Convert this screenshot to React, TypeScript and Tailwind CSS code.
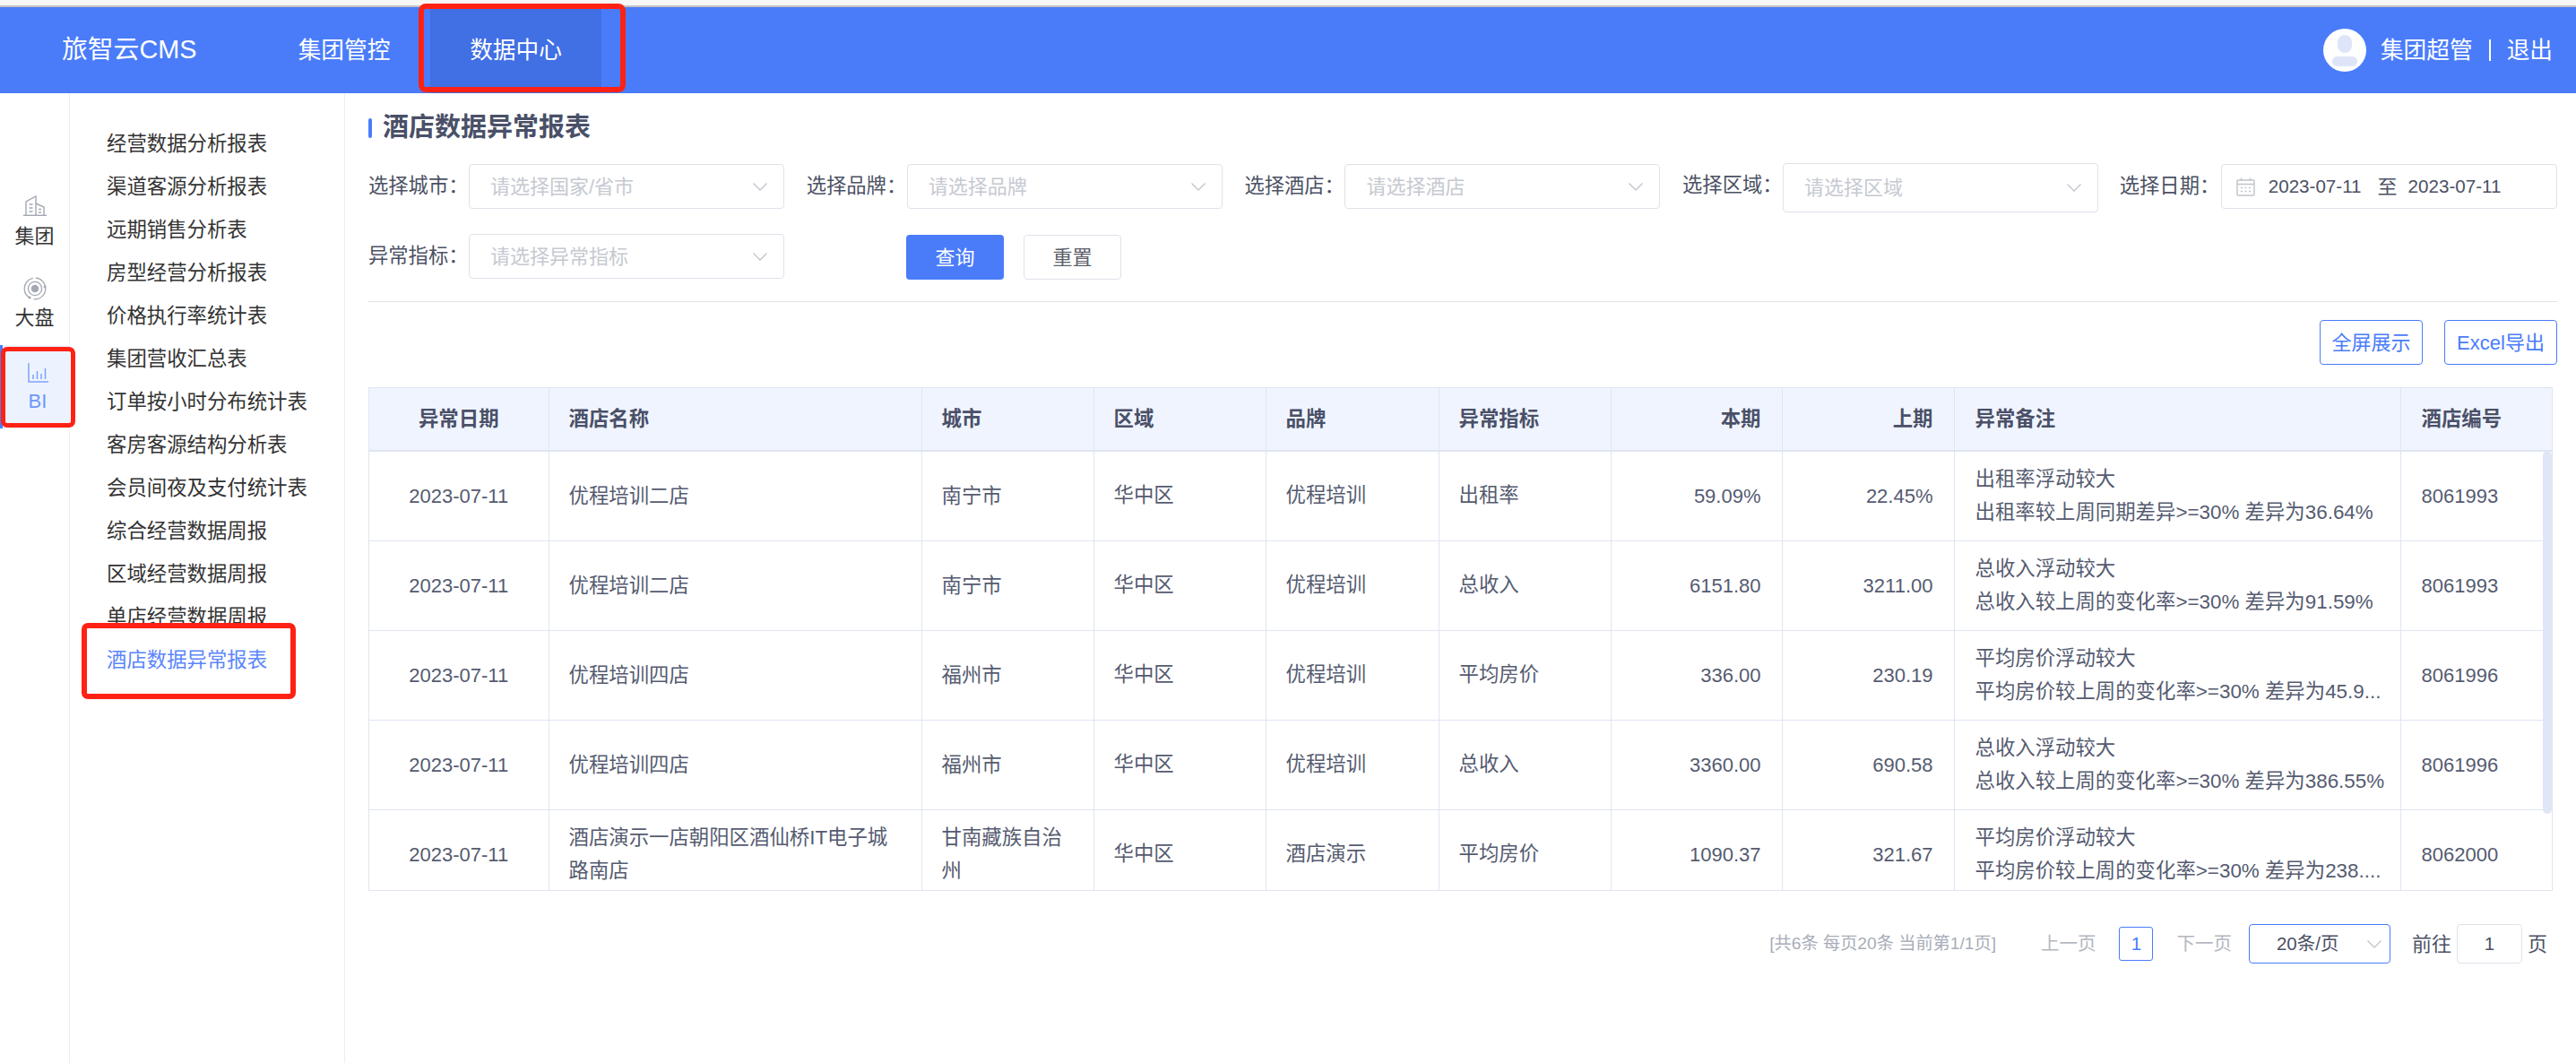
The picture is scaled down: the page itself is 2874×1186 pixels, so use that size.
const reports = [
  '经营数据分析报表',
  '渠道客源分析报表',
  '远期销售分析表',
  '房型经营分析报表',
  '价格执行率统计表',
  '集团营收汇总表',
  '订单按小时分布统计表',
  '客房客源结构分析表',
  '会员间夜及支付统计表',
  '综合经营数据周报',
  '区域经营数据周报',
  '单店经营数据周报',
  '酒店数据异常报表',
]

const rows = [
  ['优程培训二店', '南宁市', '优程培训', '出租率', '59.09%', '22.45%', '出租率浮动较大', '出租率较上周同期差异>=30% 差异为36.64%', '8061993'],
  ['优程培训二店', '南宁市', '优程培训', '总收入', '6151.80', '3211.00', '总收入浮动较大', '总收入较上周的变化率>=30% 差异为91.59%', '8061993'],
  ['优程培训四店', '福州市', '优程培训', '平均房价', '336.00', '230.19', '平均房价浮动较大', '平均房价较上周的变化率>=30% 差异为45.9...', '8061996'],
  ['优程培训四店', '福州市', '优程培训', '总收入', '3360.00', '690.58', '总收入浮动较大', '总收入较上周的变化率>=30% 差异为386.55%', '8061996'],
  ['酒店演示一店朝阳区酒仙桥IT电子城路南店', '甘南藏族自治州', '酒店演示', '平均房价', '1090.37', '321.67', '平均房价浮动较大', '平均房价较上周的变化率>=30% 差异为238....', '8062000'],
]

function Chevron() {
  return (
    <svg width="16" height="9" viewBox="0 0 16 9" fill="none" stroke="#c0c4cc" strokeWidth="1.3" className="shrink-0">
      <path d="M0.5 0.5 L8 8 L15.5 0.5" />
    </svg>
  )
}

function BuildingIcon() {
  return (
    <svg width="26" height="23" viewBox="0 0 26 23" fill="none" stroke="#a3a8b4" strokeWidth="1.4">
      <path d="M0 22.3 H26" />
      <path d="M3 22 V7 L14 1 V22" />
      <path d="M14 9 L23 13 V22" />
      <path d="M6.5 10 H10.5 M6.5 14 H10.5 M6.5 18 H10.5 M17 15.5 H20 M17 19 H20" />
    </svg>
  )
}

function TargetIcon() {
  return (
    <svg width="26" height="26" viewBox="0 0 26 26" fill="none" stroke="#a3a8b4" strokeWidth="1.3">
      <circle cx="13" cy="13" r="11.8" strokeDasharray="20 3 30 3" />
      <circle cx="13" cy="13" r="7.6" />
      <circle cx="13" cy="13" r="3.6" fill="#a3a8b4" />
      <circle cx="24" cy="11" r="1.4" fill="#a3a8b4" stroke="none" />
      <circle cx="7" cy="23" r="1.4" fill="#a3a8b4" stroke="none" />
    </svg>
  )
}

function BarsIcon() {
  return (
    <svg width="23" height="22" viewBox="0 0 23 22" fill="none" stroke="#7ea2fb" strokeWidth="1.5">
      <path d="M1 0 V21 H23" />
      <path d="M6 18 V13 M10.5 18 V9 M15 18 V12 M19.5 18 V6" />
    </svg>
  )
}

function CalendarIcon() {
  return (
    <svg width="21" height="21" viewBox="0 0 21 21" fill="none" stroke="#c0c4cc" strokeWidth="1.4" className="shrink-0">
      <rect x="1" y="3" width="19" height="17" rx="1" />
      <path d="M1 7.5 H20 M5.5 0.5 V4 M15.5 0.5 V4" />
      <path d="M5 11.5 H7 M9.5 11.5 H11.5 M14 11.5 H16 M5 15.5 H7 M9.5 15.5 H11.5 M14 15.5 H16" />
    </svg>
  )
}

function Select({ label, placeholder, className = 'h-[50px]' }: { label: string; placeholder: string; className?: string }) {
  return (
    <div className="flex items-start">
      <div className="w-[112px] h-[50px] leading-[50px] text-[22.3px] text-[#4c5164]">{label}：</div>
      <div className={`w-[352px] flex items-center justify-between pl-[23px] pr-[18px] border border-[#dfe2ea] rounded-[4px] bg-white ${className}`}>
        <span className="text-[22px] text-[#c6c9d1]">{placeholder}</span>
        <Chevron />
      </div>
    </div>
  )
}

export default function App() {
  return (
    <div className="h-screen flex flex-col overflow-hidden bg-white relative font-['Liberation_Sans','Noto_Sans_CJK_SC',sans-serif]">
      <div className="h-[8px] shrink-0 bg-[#f6f6f6] border-b-2 border-[#c2c2c2]" />

      <header className="h-[96px] shrink-0 bg-[#4a7cfa] text-white flex items-center pl-[69px] pr-[26px]">
        <div className="text-[28.8px] w-[219px]">旅智云CMS</div>
        <nav className="flex self-stretch text-[25.7px]">
          <div className="w-[192px] flex items-center justify-center">集团管控</div>
          <div className="w-[191px] flex items-center justify-center bg-[#416fe4]">数据中心</div>
        </nav>
        <div className="ml-auto flex items-center text-[25.7px]">
          <div className="w-[48px] h-[48px] rounded-full bg-white flex flex-col items-center justify-center gap-[4px] overflow-hidden">
            <div className="w-[16px] h-[20px] rounded-full bg-[#dfe5f8]" />
            <div className="w-[28px] h-[11px] rounded-full bg-[#dfe5f8]" />
          </div>
          <span className="ml-[16px]">集团超管</span>
          <span className="mx-[18px] w-[2px] h-[24px] bg-white" />
          <span>退出</span>
        </div>
      </header>

      <div className="flex-1 flex min-h-0">
        <aside className="w-[78px] shrink-0 border-r border-[#eceef5] pt-[95px] text-[22px] text-[#333]">
          <div className="h-[93px] flex flex-col items-center pt-[19px] gap-[10px]">
            <BuildingIcon />
            <span className="leading-[26px]">集团</span>
          </div>
          <div className="h-[93px] flex flex-col items-center pt-[17px] gap-[7px]">
            <TargetIcon />
            <span className="leading-[26px]">大盘</span>
          </div>
          <div className="h-[93px] flex flex-col items-center pt-[20px] pl-[4px] gap-[8px] bg-[#edf3fe] border-l-[3px] border-[#4a7cfa] text-[#6f97fa]">
            <BarsIcon />
            <span className="leading-[26px]">BI</span>
          </div>
        </aside>

        <aside className="w-[307px] shrink-0 border-r border-[#eceef5] pt-[33px] pl-[41px]">
          {reports.map((r, i) => (
            <div key={r} className={`h-[48px] leading-[48px] text-[22.4px] ${i === reports.length - 1 ? 'text-[#5b86fb]' : 'text-[#333]'}`}>
              {r}
            </div>
          ))}
        </aside>

        <main className="flex-1 min-w-0 pl-[26px] pr-[21px]">
          <div className="h-[79px] flex items-center pb-[1px]">
            <span className="w-[4px] h-[22px] rounded-[2px] bg-[#4a7cfa]" />
            <h1 className="ml-[12px] text-[29px] font-bold text-[#4a5068]">酒店数据异常报表</h1>
          </div>

          <div className="flex items-start gap-[24.7px] h-[50px]">
            <Select label="选择城市" placeholder="请选择国家/省市" />
            <Select label="选择品牌" placeholder="请选择品牌" />
            <Select label="选择酒店" placeholder="请选择酒店" />
            <div className="-mt-px">
              <Select label="选择区域" placeholder="请选择区域" className="h-[55px]" />
            </div>
            <div className="flex items-start -ml-[1px]">
              <div className="w-[113px] h-[50px] leading-[50px] text-[22.3px] text-[#4c5164]">选择日期：</div>
              <div className="w-[375px] h-[50px] flex items-center pl-[16px] border border-[#dfe2ea] rounded-[4px] text-[20.6px] text-[#4c5164]">
                <CalendarIcon />
                <span className="ml-[15px]">2023-07-11</span>
                <span className="ml-[18px] text-[22px]">至</span>
                <span className="ml-[12px]">2023-07-11</span>
              </div>
            </div>
          </div>

          <div className="flex items-center mt-[28px] h-[50px]">
            <Select label="异常指标" placeholder="请选择异常指标" />
            <button className="ml-[136px] mt-[2px] w-[109px] h-[50px] rounded-[4px] bg-[#4a7cfa] text-white text-[22px]">查询</button>
            <button className="ml-[22px] mt-[2px] w-[109px] h-[50px] rounded-[4px] border border-[#dfe2ea] text-[#5c5f6a] text-[22px]">重置</button>
          </div>

          <div className="mt-[25px] border-t border-[#e0e2ea]" />

          <div className="mt-[20px] flex justify-end gap-[24px]">
            <button className="w-[115px] h-[50px] rounded-[4px] border border-[#4a7cfa] text-[#4a7cfa] text-[22px]">全屏展示</button>
            <button className="w-[126px] h-[50px] rounded-[4px] border border-[#4a7cfa] text-[#4a7cfa] text-[22px]">Excel导出</button>
          </div>

          <div className="relative mt-[25px] mr-[5px] h-[562px] overflow-hidden border border-[#e0e5f2]">
            <table className="w-[2435px] table-fixed border-collapse text-[22.4px] text-[#555b70]">
              <colgroup>
                <col className="w-[200px]" />
                <col className="w-[416px]" />
                <col className="w-[192px]" />
                <col className="w-[192px]" />
                <col className="w-[193px]" />
                <col className="w-[192px]" />
                <col className="w-[191px]" />
                <col className="w-[192px]" />
                <col className="w-[498px]" />
                <col className="w-[169px]" />
              </colgroup>
              <thead>
                <tr className="h-[70px] bg-[#f0f4fe] text-[#4a5068] font-bold">
                  <th className="text-center border-r border-b-2 border-[#e0e5f2]">异常日期</th>
                  <th className="text-left pl-[22px] border-r border-b-2 border-[#e0e5f2]">酒店名称</th>
                  <th className="text-left pl-[22px] border-r border-b-2 border-[#e0e5f2]">城市</th>
                  <th className="text-left pl-[22px] border-r border-b-2 border-[#e0e5f2]">区域</th>
                  <th className="text-left pl-[22px] border-r border-b-2 border-[#e0e5f2]">品牌</th>
                  <th className="text-left pl-[22px] border-r border-b-2 border-[#e0e5f2]">异常指标</th>
                  <th className="text-right pr-[23px] border-r border-b-2 border-[#e0e5f2]">本期</th>
                  <th className="text-right pr-[23px] border-r border-b-2 border-[#e0e5f2]">上期</th>
                  <th className="text-left pl-[23px] border-r border-b-2 border-[#e0e5f2]">异常备注</th>
                  <th className="text-left pl-[23px] border-b-2 border-[#e0e5f2]">酒店编号</th>
                </tr>
              </thead>
              <tbody>
                {rows.map((r, i) => (
                  <tr key={i} className="h-[100px]">
                    <td className="text-center text-[22px] border-r border-b border-[#e0e5f2]">2023-07-11</td>
                    <td className="px-[22px] leading-[37px] border-r border-b border-[#e0e5f2]">{r[0]}</td>
                    <td className="px-[22px] leading-[37px] border-r border-b border-[#e0e5f2]">{r[1]}</td>
                    <td className="px-[22px] border-r border-b border-[#e0e5f2]">华中区</td>
                    <td className="px-[22px] border-r border-b border-[#e0e5f2]">{r[2]}</td>
                    <td className="px-[22px] border-r border-b border-[#e0e5f2]">{r[3]}</td>
                    <td className="text-right text-[22px] pr-[23px] border-r border-b border-[#e0e5f2]">{r[4]}</td>
                    <td className="text-right text-[22px] pr-[23px] border-r border-b border-[#e0e5f2]">{r[5]}</td>
                    <td className="pl-[23px] leading-[37px] whitespace-nowrap border-r border-b border-[#e0e5f2]">
                      <div>{r[6]}</div>
                      <div>{r[7]}</div>
                    </td>
                    <td className="pl-[23px] text-[22px] border-b border-[#e0e5f2]">{r[8]}</td>
                  </tr>
                ))}
              </tbody>
            </table>
            {/* scrollbar thumb */}
            <div className="absolute right-0 top-[70px] w-[10px] h-[405px] rounded-[5px] bg-[#e0e6f5]" />
          </div>

          <div className="mt-[37px] mr-[11px] flex items-center justify-end h-[44px] text-[20.5px] text-[#b4b7bf]">
            <span className="text-[19.2px] text-[#a8adb8]">[共6条 每页20条 当前第1/1页]</span>
            <span className="ml-[50px]">上一页</span>
            <span className="ml-[26px] w-[38px] h-[38px] flex items-center justify-center rounded-[3px] border border-[#4a7cfa] text-[#4a7cfa]">1</span>
            <span className="ml-[26px]">下一页</span>
            <div className="ml-[19px] w-[158px] h-[44px] flex items-center justify-between pl-[30px] pr-[9px] rounded-[4px] border border-[#4a7cfa] text-[#4c5164]">
              <span>20条/页</span>
              <Chevron />
            </div>
            <span className="ml-[24px] text-[22px] text-[#4c5164]">前往</span>
            <div className="ml-[6px] w-[73px] h-[44px] flex items-center justify-center rounded-[4px] border border-[#dfe2ea] text-[#4c5164]">1</div>
            <span className="ml-[6px] text-[22px] text-[#4c5164]">页</span>
          </div>
        </main>
      </div>

      {/* red annotation boxes drawn over the screenshot */}
      <div className="absolute left-[467px] top-[4px] w-[231px] h-[99px] border-[6px] border-[#ff2214] rounded-[8px]" />
      <div className="absolute left-[1px] top-[387px] w-[83px] h-[90px] border-[5px] border-[#ff2214] rounded-[7px]" />
      <div className="absolute left-[91px] top-[695px] w-[239px] h-[85px] border-[6px] border-[#ff2214] rounded-[7px]" />
    </div>
  )
}
